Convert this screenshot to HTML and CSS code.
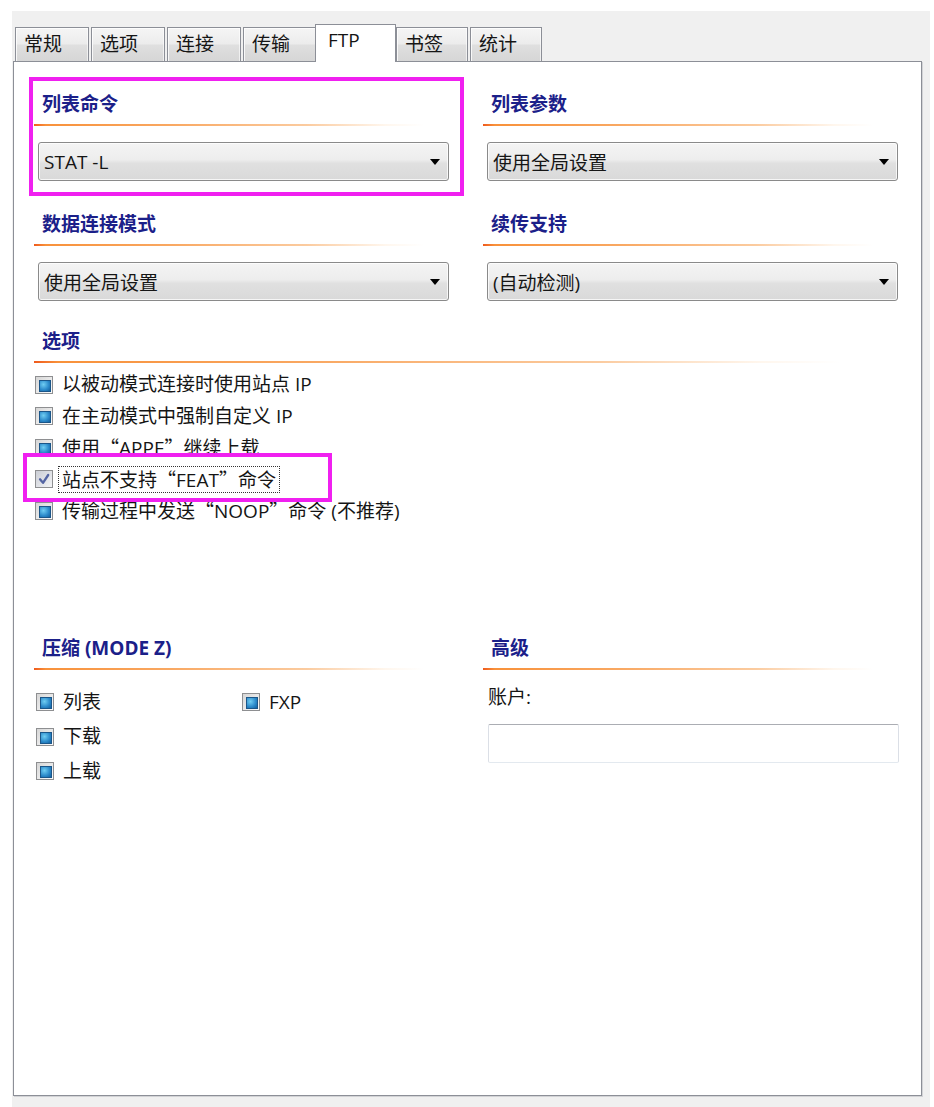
FILE: index.html
```html
<!DOCTYPE html>
<html lang="zh-CN">
<head>
<meta charset="utf-8">
<title>FTP</title>
<link rel="stylesheet" href="styles.css">
</head>
<body>
<div class="window">
  <div class="tabs">
    <div class="tab">常规</div>
    <div class="tab">选项</div>
    <div class="tab">连接</div>
    <div class="tab">传输</div>
    <div class="tab active">FTP</div>
    <div class="tab">书签</div>
    <div class="tab">统计</div>
  </div>
  <div class="panel">
    <div class="row2">
      <section class="group">
        <h3 class="gh">列表命令</h3>
        <div class="rule"></div>
        <div class="combo"><span>STAT -L</span><i class="arrow"></i></div>
      </section>
      <section class="group">
        <h3 class="gh">列表参数</h3>
        <div class="rule"></div>
        <div class="combo"><span>使用全局设置</span><i class="arrow"></i></div>
      </section>
    </div>
    <div class="row2 next">
      <section class="group">
        <h3 class="gh">数据连接模式</h3>
        <div class="rule"></div>
        <div class="combo"><span>使用全局设置</span><i class="arrow"></i></div>
      </section>
      <section class="group">
        <h3 class="gh">续传支持</h3>
        <div class="rule"></div>
        <div class="combo"><span>(自动检测)</span><i class="arrow"></i></div>
      </section>
    </div>
    <section class="options">
      <h3 class="gh">选项</h3>
      <div class="rule wide"></div>
      <div class="checklist">
        <div class="cbrow"><span class="cb"></span><span class="lbl">以被动模式连接时使用站点 IP</span></div>
        <div class="cbrow"><span class="cb"></span><span class="lbl">在主动模式中强制自定义 IP</span></div>
        <div class="cbrow"><span class="cb"></span><span class="lbl">使用<span class="fw">“</span>APPE<span class="fw">”</span>继续上载</span></div>
        <div class="cbrow"><span class="cb checked"><svg viewBox="0 0 16 16" width="16" height="16"><path d="M4 8.3 L7 11.8 L12.2 4" fill="none" stroke="#5465a3" stroke-width="2.3" stroke-linecap="round" stroke-linejoin="round"/></svg></span><span class="lbl focus">站点不支持<span class="fw">“</span>FEAT<span class="fw">”</span>命令</span></div>
        <div class="cbrow"><span class="cb"></span><span class="lbl">传输过程中发送<span class="fw">“</span>NOOP<span class="fw">”</span>命令 (不推荐)</span></div>
      </div>
    </section>
    <div class="row2 compress">
      <section class="group">
        <h3 class="gh">压缩 (MODE Z)</h3>
        <div class="rule"></div>
        <div class="cgrid">
          <div class="cbrow"><span class="cb"></span><span class="lbl">列表</span></div>
          <div class="cbrow"><span class="cb"></span><span class="lbl">下载</span></div>
          <div class="cbrow"><span class="cb"></span><span class="lbl">上载</span></div>
          <div class="cbrow"><span class="cb"></span><span class="lbl">FXP</span></div>
        </div>
      </section>
      <section class="group">
        <h3 class="gh">高级</h3>
        <div class="rule"></div>
        <div class="field-label">账户:</div>
        <div class="textbox"></div>
      </section>
    </div>
    <div class="mark mark-1"></div>
    <div class="mark mark-2"></div>
  </div>
</div>
</body>
</html>
```
FILE: styles.css
```css
* { box-sizing: border-box; }

body {
  margin: 0;
  background: #ffffff;
  font-family: "Open Sans", "Noto Sans CJK SC", sans-serif;
  font-size: 19px;
  color: #151515;
}

.fw { font-family: "Noto Sans CJK SC", sans-serif; }

.window {
  margin: 11px 0 0 12px;
  width: 918px;
  height: 1096px;
  background: #f0f0f0;
  padding: 13px 0 0 1px;
}

/* tabs */
.tabs {
  display: flex;
  align-items: flex-end;
  height: 37px;
  padding-left: 2px;
  position: relative;
  z-index: 2;
}

.tab {
  width: 74px;
  height: 34px;
  margin-right: 2px;
  border: 1px solid #8c8f97;
  border-bottom: none;
  background: linear-gradient(#f5f5f5, #ececec 48%, #dfdfdf 52%, #d6d6d6);
  box-shadow: inset 1px 1px 0 rgba(255,255,255,0.8), inset -1px 0 0 rgba(255,255,255,0.6);
  padding-left: 8px;
  line-height: 33px;
  white-space: nowrap;
}

.tab.active {
  width: 81px;
  height: 38px;
  margin: 0 0 -1px -4px;
  background: #ffffff;
  box-shadow: none;
  padding-left: 12px;
  line-height: 30px;
}

.tab.active + .tab { width: 72px; }
.tab.active + .tab + .tab { width: 72px; }

/* panel */
.panel {
  position: relative;
  width: 909px;
  height: 1035px;
  border: 1px solid #8c8f97;
  box-shadow: 1px 1px 0 #d2d3d6;
  background: #ffffff;
  padding: 30px 0 0 20px;
}

.row2 {
  display: grid;
  grid-template-columns: 449px 1fr;
}

.row2.next { margin-top: 31px; }

.gh {
  margin: 0;
  font-size: 19px;
  font-weight: 700;
  color: #1b2089;
  line-height: 24px;
  padding-left: 8px;
  white-space: nowrap;
}

.rule {
  margin-top: 8px;
  width: 390px;
  height: 2px;
  background: linear-gradient(to right, #ef5a1c 0, #f8913a 3%, #f9a862 35%, #fbcb9f 70%, rgba(255,238,220,0.5) 90%, rgba(255,255,255,0) 100%);
}

.rule.wide { width: 806px; }

.combo {
  margin: 16px 0 0 4px;
  width: 411px;
  height: 39px;
  border: 1px solid #8a8a8a;
  border-radius: 3px;
  background: linear-gradient(#f4f4f4, #ededed 45%, #e0e0e0 55%, #d9d9d9);
  box-shadow: inset 0 0 0 1px rgba(255,255,255,0.75);
  display: flex;
  align-items: center;
  justify-content: space-between;
  padding: 0 8px 0 5px;
  white-space: nowrap;
}

.arrow {
  width: 0;
  height: 0;
  border-left: 5.5px solid transparent;
  border-right: 5.5px solid transparent;
  border-top: 6px solid #000000;
}

/* options */
.options { margin-top: 28px; }

.checklist {
  margin-top: 6px;
  padding-left: 1px;
}

.cbrow {
  height: 31.5px;
  display: flex;
  align-items: center;
  white-space: nowrap;
}

.cb {
  flex: none;
  width: 18px;
  height: 18px;
  border: 1px solid #8e8f91;
  background: linear-gradient(135deg, #d6d6d6, #fbfbfb);
  padding: 3px;
}

.cb::before {
  content: "";
  display: block;
  width: 100%;
  height: 100%;
  border: 1px solid #1b5689;
  background: radial-gradient(circle at 35% 35%, #6fcdf2, #2a88c9 60%, #14609c);
}

.cb.checked {
  padding: 0;
  background: linear-gradient(135deg, #cbced5, #f3f4f6);
}

.cb.checked::before { display: none; }

.cb.checked svg { display: block; }

.lbl {
  margin-left: 5px;
  border: 1px solid transparent;
  padding: 0 3px;
  line-height: 23px;
}

.lbl.focus { border: 1px dotted #333333; }

/* compression / advanced */
.row2.compress { margin-top: 109.5px; }

.cgrid {
  margin-top: 15px;
  padding-left: 2px;
  display: grid;
  grid-template-columns: 206px 1fr;
  grid-template-rows: repeat(3, 34.5px);
  grid-auto-flow: column;
}

.cgrid .cbrow { height: 34.5px; }

.field-label {
  margin: 15px 0 0 5px;
  line-height: 24px;
}

.textbox {
  margin: 15px 0 0 5px;
  width: 411px;
  height: 39px;
  border: 1px solid #dbdfe6;
  border-top-color: #abadb3;
  border-bottom-color: #e3e9ef;
  border-radius: 2px;
  background: #ffffff;
}

/* highlight annotations */
.mark {
  position: absolute;
  border: 4px solid #f020f0;
  z-index: 3;
}

.mark-1 { left: 15px; top: 15px; width: 435px; height: 119px; }
.mark-2 { left: 9px; top: 391px; width: 309px; height: 49px; }
```
